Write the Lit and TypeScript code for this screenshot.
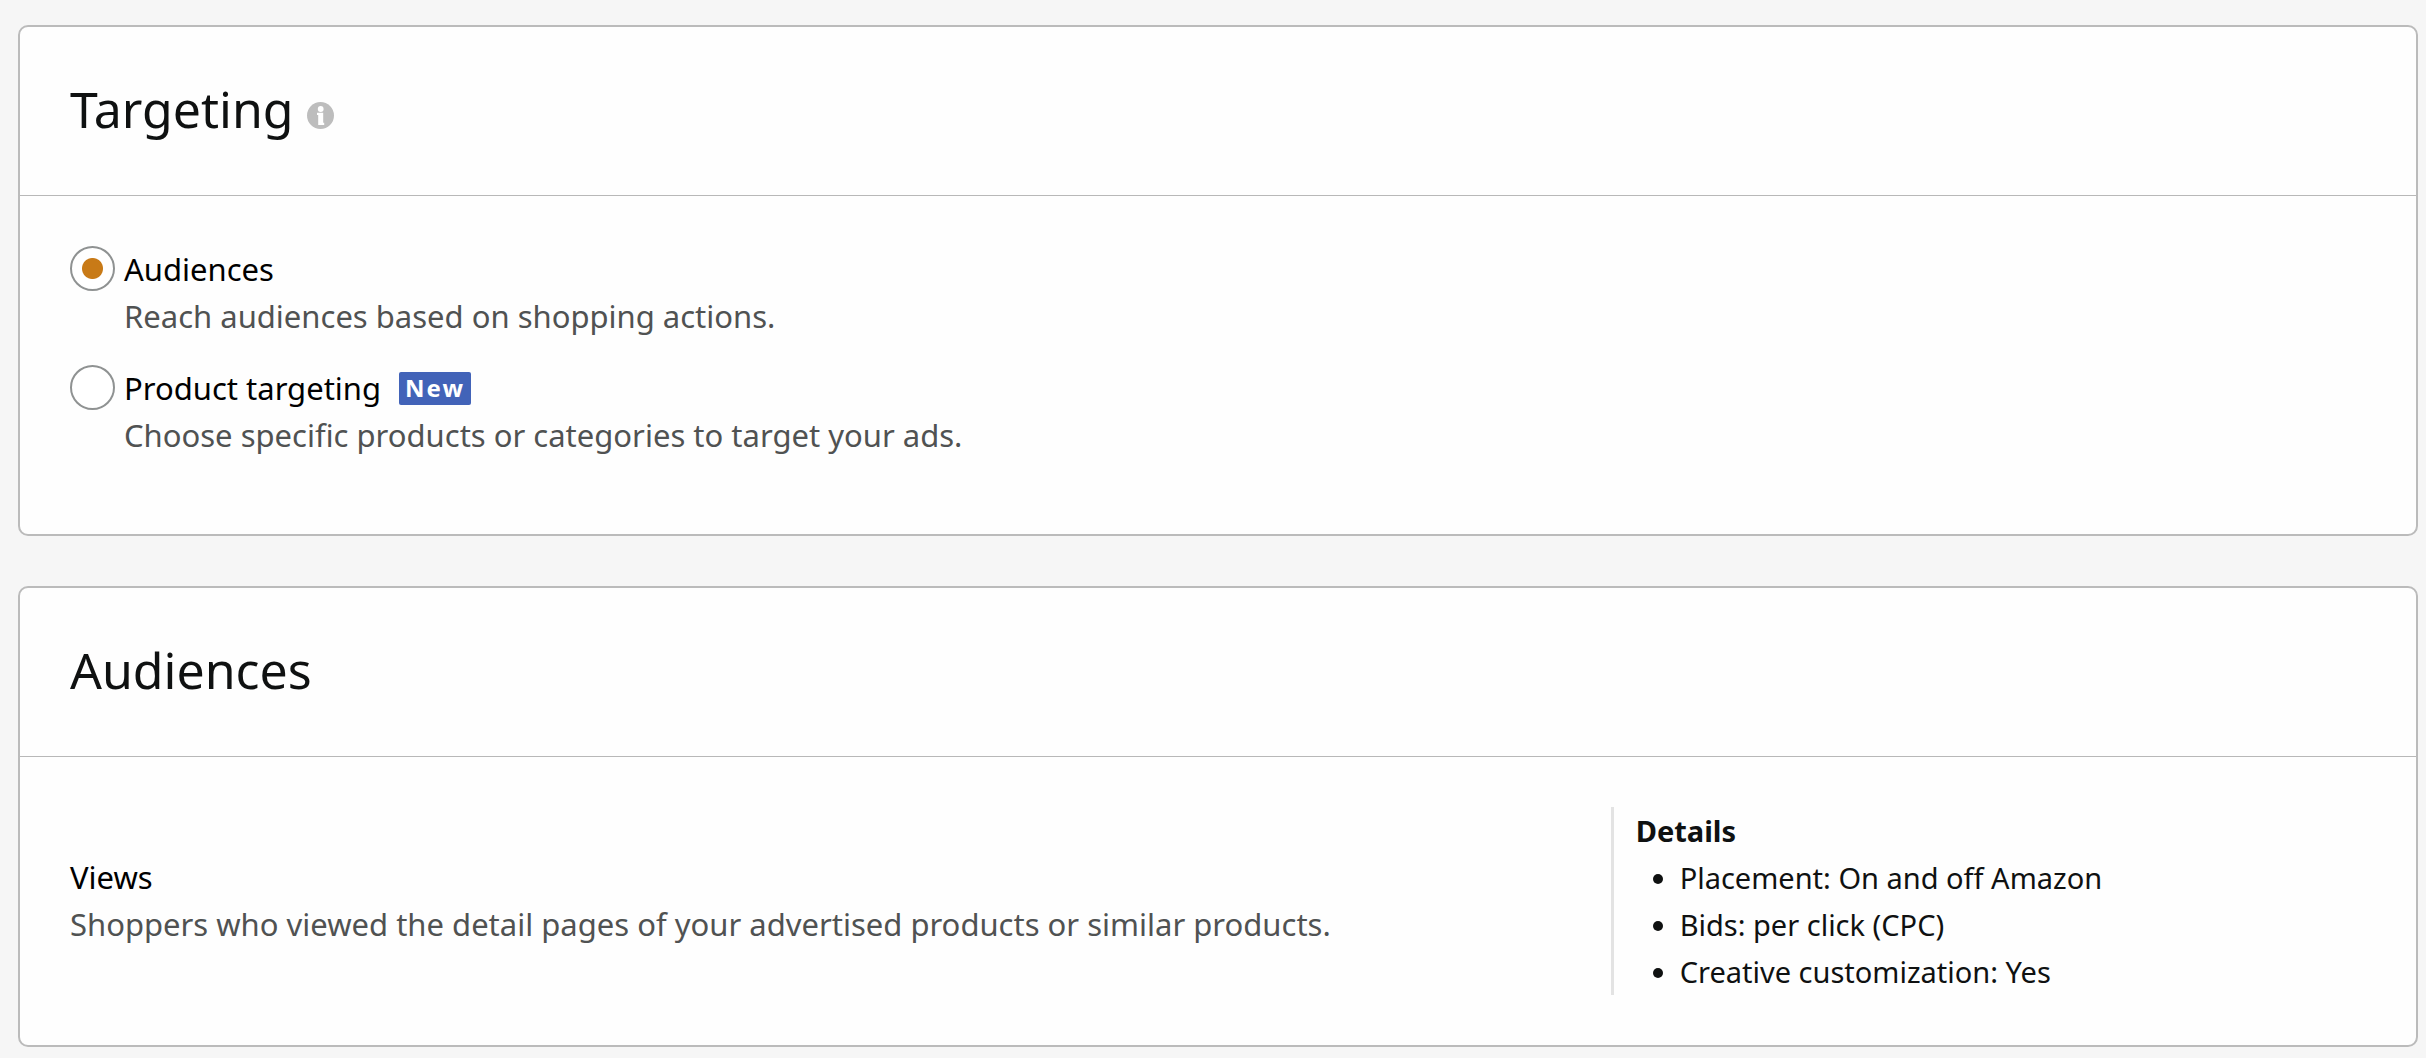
import { LitElement, html, css, svg } from "lit";
import { customElement, property, state } from "lit/decorators.js";

const infoIcon = svg`
  <svg class="info-icon" viewBox="0 0 27 27" aria-hidden="true">
    <circle cx="13.5" cy="13.5" r="13.5" fill="#bdbdbd"></circle>
    <circle cx="13.7" cy="7" r="2.9" fill="#fff"></circle>
    <path d="M10 10.8H16.2V20.8H17.2V23H11.2V13H10Z" fill="#fff"></path>
  </svg>`;

@customElement("section-card")
export class SectionCard extends LitElement {
  @property() heading = "";
  @property({ type: Boolean }) info = false;

  static styles = css`
    :host {
      display: block;
      box-sizing: border-box;
      background: #fefefe;
      border: 2px solid #bbbbbb;
      border-radius: 10px;
    }
    .header {
      display: flex;
      align-items: center;
      gap: 13px;
      padding: 48px 50px 52px;
      border-bottom: 1px solid #b8b8b8;
    }
    .title {
      margin: 0;
      font-size: 50px;
      line-height: 68px;
      font-weight: 400;
    }
    .info-button {
      display: flex;
      margin: 12px 0 0;
      padding: 0;
      border: 0;
      background: none;
      cursor: pointer;
    }
    .info-icon {
      display: block;
      width: 27px;
      height: 27px;
    }
    .body {
      padding: 50px;
    }
  `;

  render() {
    return html`
      <div class="header">
        <h2 class="title">${this.heading}</h2>
        ${this.info
          ? html`<button class="info-button" type="button" aria-label="About ${this.heading}">${infoIcon}</button>`
          : ""}
      </div>
      <div class="body"><slot></slot></div>
    `;
  }
}

interface TargetingOption {
  id: string;
  label: string;
  hint: string;
  badge?: string;
}

const OPTIONS: TargetingOption[] = [
  { id: "audiences", label: "Audiences", hint: "Reach audiences based on shopping actions." },
  {
    id: "products",
    label: "Product targeting",
    hint: "Choose specific products or categories to target your ads.",
    badge: "New",
  },
];

const DETAILS = ["Placement: On and off Amazon", "Bids: per click (CPC)", "Creative customization: Yes"];

@customElement("app-root")
export class AppRoot extends LitElement {
  @state() private selected = "audiences";

  static styles = css`
    :host {
      display: flex;
      flex-direction: column;
      gap: 50px;
      box-sizing: border-box;
      min-height: 100vh;
      padding: 25px 8px 11px 18px;
      background: #f6f6f6;
      color: #0f1111;
      font-family: "Noto Sans", "Open Sans", sans-serif;
      font-size: 31px;
      line-height: 47px;
    }
    .options {
      margin: 0;
      padding: 0;
      border: 0;
    }
    .option {
      display: grid;
      grid-template-columns: 45px 1fr;
      column-gap: 9px;
      padding-bottom: 25px;
    }
    .radio {
      appearance: none;
      width: 45px;
      height: 45px;
      margin: 0;
      border: 2px solid #8f9292;
      border-radius: 50%;
      background: #fff;
      cursor: pointer;
    }
    .radio:checked {
      background: radial-gradient(circle, #c87a17 10px, #fff 11px);
    }
    .label-row {
      display: flex;
      align-items: center;
      gap: 18px;
    }
    .label {
      color: #000;
    }
    .badge {
      padding: 0 6px 2px;
      border-radius: 2px;
      background: #4263b8;
      color: #fff;
      font-size: 24px;
      line-height: 31px;
      font-weight: 700;
      letter-spacing: 2px;
    }
    .hint {
      grid-column: 2;
      margin: 0;
      color: #505252;
    }
    .audience {
      display: grid;
      grid-template-columns: 2fr 1fr;
      column-gap: 30px;
      align-items: center;
    }
    .name {
      margin: 0;
      font-size: 31px;
      font-weight: 400;
      color: #000;
    }
    .details {
      padding-left: 22px;
      border-left: 3px solid #e3e3e3;
      font-size: 29px;
    }
    .details-title {
      margin: 0;
      font-size: 29px;
      font-weight: 700;
    }
    .details-list {
      margin: 0;
      padding-left: 44px;
    }
  `;

  render() {
    return html`
      <section-card heading="Targeting" info>
        <fieldset class="options" aria-label="Targeting">
          ${OPTIONS.map(
            (o) => html`
              <div class="option">
                <input
                  class="radio"
                  type="radio"
                  name="targeting"
                  id=${o.id}
                  aria-describedby="${o.id}-hint"
                  .checked=${this.selected === o.id}
                  @change=${() => (this.selected = o.id)}
                />
                <div class="label-row">
                  <label class="label" for=${o.id}>${o.label}</label>
                  ${o.badge ? html`<span class="badge">${o.badge}</span>` : ""}
                </div>
                <p class="hint" id="${o.id}-hint">${o.hint}</p>
              </div>
            `
          )}
        </fieldset>
      </section-card>
      <section-card heading="Audiences">
        <div class="audience">
          <div>
            <h3 class="name">Views</h3>
            <p class="hint">Shoppers who viewed the detail pages of your advertised products or similar products.</p>
          </div>
          <div class="details">
            <h4 class="details-title">Details</h4>
            <ul class="details-list">
              ${DETAILS.map((d) => html`<li>${d}</li>`)}
            </ul>
          </div>
        </div>
      </section-card>
    `;
  }
}
